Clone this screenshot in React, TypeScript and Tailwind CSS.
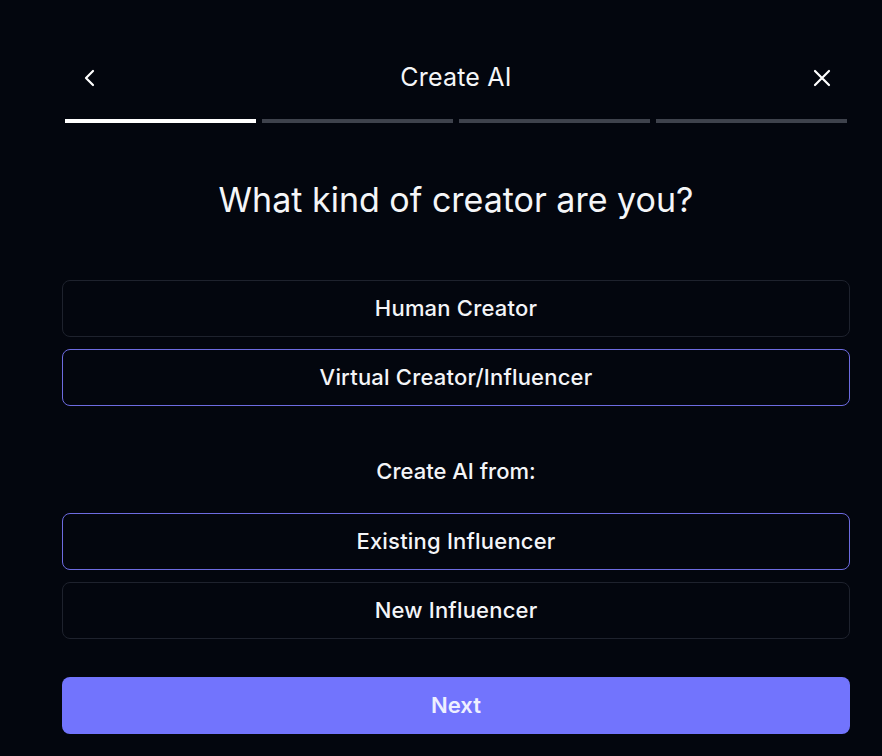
import React from "react";

const options1 = [
  { label: "Human Creator", selected: false },
  { label: "Virtual Creator/Influencer", selected: true },
];
const options2 = [
  { label: "Existing Influencer", selected: true },
  { label: "New Influencer", selected: false },
];

function Option({ label, selected }: { label: string; selected: boolean }) {
  return (
    <button
      className={`h-[57px] w-full rounded-[8px] border text-[22px] font-medium tracking-[0.2px] text-[#f4f5f8] ${
        selected ? "border-[#6d6be0]" : "border-[#1e222d]"
      } bg-[#03060e]`}
    >
      {label}
    </button>
  );
}

export default function App() {
  return (
    <div
      className="min-h-[756px] w-full bg-[#03060e] text-white"
      style={{ fontFamily: "Inter, 'Noto Sans', sans-serif" }}
    >
      <div className="ml-[62px] w-[788px] pt-[58px]">
        <div className="relative flex h-[40px] items-center justify-center px-[3px]">
          <button className="absolute left-[16px] top-1/2 -translate-y-1/2 text-white">
            <svg width="24" height="24" viewBox="0 0 24 24" fill="none" stroke="currentColor" strokeWidth="2.2" strokeLinecap="round" strokeLinejoin="round">
              <path d="M15 5l-7 7 7 7" />
            </svg>
          </button>
          <span className="text-[25px] font-normal tracking-[0.2px] text-[#f5f6f8]">Create AI</span>
          <button className="absolute right-[16px] top-1/2 -translate-y-1/2 text-white">
            <svg width="24" height="24" viewBox="0 0 24 24" fill="none" stroke="currentColor" strokeWidth="2.2" strokeLinecap="round">
              <path d="M5 5l14 14M19 5L5 19" />
            </svg>
          </button>
        </div>
        <div className="mx-[3px] mt-[21px] grid grid-cols-4 gap-[6px]">
          <div className="h-[4px] bg-white" />
          <div className="h-[4px] bg-[#3e424c]" />
          <div className="h-[4px] bg-[#3e424c]" />
          <div className="h-[4px] bg-[#3e424c]" />
        </div>
        <h1 className="mt-[57px] text-center text-[34px] font-normal leading-[40px] tracking-[0px] text-[#f5f6f8]">
          What kind of creator are you?
        </h1>
        <div className="mt-[60px] flex flex-col gap-[12px]">
          {options1.map((o) => (
            <Option key={o.label} {...o} />
          ))}
        </div>
        <div className="mt-[52px] text-center text-[22px] font-medium leading-[26px] text-[#f4f5f8]">
          Create AI from:
        </div>
        <div className="mt-[29px] flex flex-col gap-[12px]">
          {options2.map((o) => (
            <Option key={o.label} {...o} />
          ))}
        </div>
        <button className="mt-[38px] h-[57px] w-full rounded-[8px] bg-[#7274fd] text-[22px] font-semibold text-[#eef0ff]">
          Next
        </button>
      </div>
    </div>
  );
}
